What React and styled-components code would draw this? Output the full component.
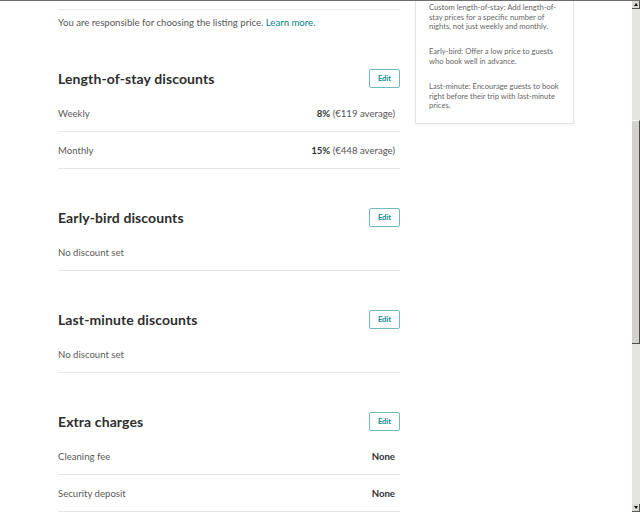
import styled, { createGlobalStyle } from 'styled-components';

const GlobalStyle = createGlobalStyle`
  html, body { margin: 0; padding: 0; background: #fff; overflow: hidden; }
  body { font-family: 'Lato', 'Liberation Sans', sans-serif; color: #484848; }
`;

const Frame = styled.div`
  height: 512px;
  border-top: 1px solid #6e6e6e;
  box-sizing: border-box;
  display: flex;
`;

const Page = styled.div`
  flex: 1;
  display: flex;
  align-items: flex-start;
  gap: 15px;
  padding-left: 58px;
`;

const Main = styled.div`
  width: 342px;
  margin-top: 8px;
`;

const Intro = styled.p`
  margin: 0;
  border-top: 1px solid #ebebeb;
  padding-top: 6px;
  font-size: 9.6px;
  line-height: 14px;
  color: #565656;
`;

const Link = styled.a`
  color: #008489;
  text-decoration: none;
`;

const Section = styled.section`
  margin-top: 39px;
`;

const Header = styled.div`
  display: flex;
  align-items: center;
  justify-content: space-between;
  height: 19px;
  margin-bottom: 7px;
`;

const Title = styled.h2`
  margin: 0;
  font-size: 14px;
  font-weight: 700;
  color: #2e2e2e;
  letter-spacing: 0.1px;
`;

const EditButton = styled.button`
  width: 31px;
  height: 19px;
  padding: 0;
  border: 1px solid #6fbcbe;
  border-radius: 2px;
  background: #fff;
  color: #0a8a8e;
  font-family: inherit;
  font-size: 7.5px;
  font-weight: 700;
`;

const Row = styled.div`
  display: flex;
  align-items: center;
  justify-content: space-between;
  height: 36px;
  padding-right: 5px;
  border-bottom: 1px solid #e6e6e6;
  font-size: 9.6px;
`;

const Label = styled.span`
  color: #5a5a5a;
`;

const Value = styled.span`
  color: #555;
  b {
    font-weight: 700;
    color: #333;
  }
`;

const Card = styled.aside`
  width: 159px;
  height: 123px;
  box-sizing: border-box;
  border: 1px solid #e4e4e4;
  border-top: none;
  box-shadow: 0 1px 2px rgba(0, 0, 0, 0.05);
  padding: 2px 13px 14px;
  font-size: 7.6px;
  line-height: 9.6px;
  color: #666;
`;

const Note = styled.p`
  margin: 0 0 15.5px;
  &:last-child { margin-bottom: 0; }
`;

const Scrollbar = styled.div`
  width: 8px;
  display: flex;
  flex-direction: column;
  background: #e6e4e1;
`;

const Arrow = styled.div`
  height: 8px;
  display: flex;
  align-items: center;
  justify-content: center;
  background: #dcd9d4;
  border-right: 1px solid #555;
  border-bottom: 1px solid #555;
  box-sizing: border-box;
  &::after {
    content: '';
    border-left: 2.5px solid transparent;
    border-right: 2.5px solid transparent;
    ${p => (p.$down ? 'border-top: 3px solid #111;' : 'border-bottom: 3px solid #111;')}
  }
`;

const Track = styled.div`
  flex: 1;
  display: flex;
  flex-direction: column;
`;

const Gap = styled.div`
  height: ${p => p.$h}px;
`;

const Thumb = styled.div`
  height: ${p => p.$h}px;
  background: #d4d1ca;
  border-right: 1px solid #4a4a4a;
  border-bottom: 1px solid #4a4a4a;
  border-top: 1px solid #f4f4f4;
  box-sizing: border-box;
`;

const sections = [
  {
    title: 'Length-of-stay discounts',
    rows: [
      ['Weekly', '8%', ' (€119 average)'],
      ['Monthly', '15%', ' (€448 average)'],
    ],
  },
  { title: 'Early-bird discounts', rows: [['No discount set']] },
  { title: 'Last-minute discounts', rows: [['No discount set']] },
  {
    title: 'Extra charges',
    rows: [
      ['Cleaning fee', 'None'],
      ['Security deposit', 'None'],
    ],
  },
];

export default function App() {
  return (
    <>
      <GlobalStyle />
      <Frame>
        <Page>
          <Main>
            <Intro>
              You are responsible for choosing the listing price. <Link href="#">Learn more.</Link>
            </Intro>
            {sections.map(s => (
              <Section key={s.title}>
                <Header>
                  <Title>{s.title}</Title>
                  <EditButton>Edit</EditButton>
                </Header>
                {s.rows.map(([label, bold, rest]) => (
                  <Row key={label}>
                    <Label>{label}</Label>
                    {bold && (
                      <Value>
                        <b>{bold}</b>
                        {rest}
                      </Value>
                    )}
                  </Row>
                ))}
              </Section>
            ))}
          </Main>
          <Card>
            <Note>
              Custom length-of-stay: Add length-of-stay prices for a specific number of nights, not just
              weekly and monthly.
            </Note>
            <Note>Early-bird: Offer a low price to guests who book well in advance.</Note>
            <Note>
              Last-minute: Encourage guests to book right before their trip with last-minute prices.
            </Note>
          </Card>
        </Page>
        <Scrollbar>
          <Arrow />
          <Track>
            <Gap $h={111} />
            <Thumb $h={224} />
          </Track>
          <Arrow $down />
        </Scrollbar>
      </Frame>
    </>
  );
}
